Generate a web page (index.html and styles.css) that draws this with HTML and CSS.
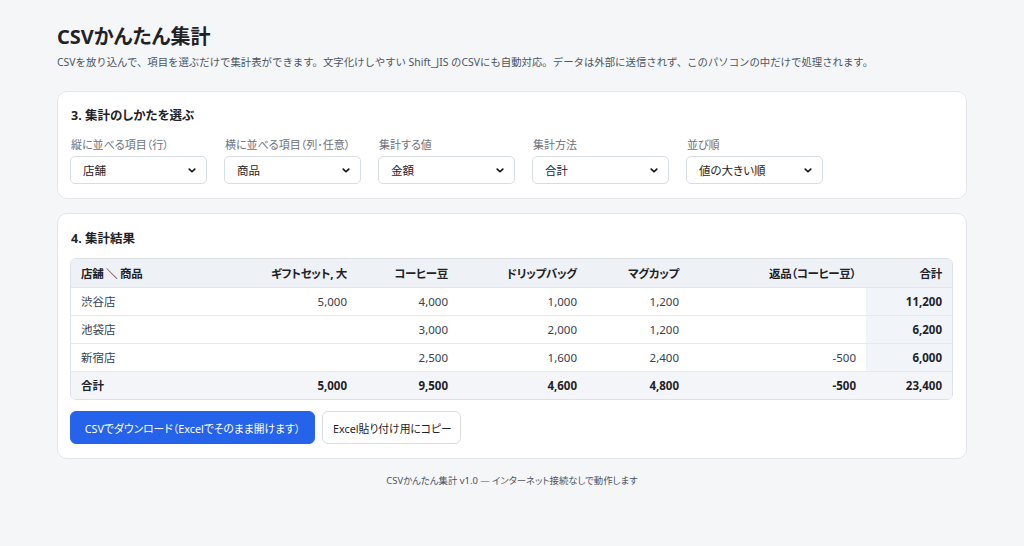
FILE: index.html
```html
<!DOCTYPE html>
<html lang="ja">
<head>
<meta charset="utf-8">
<title>CSVかんたん集計</title>
<link rel="stylesheet" href="styles.css">
</head>
<body>
<div class="wrap">
  <h1 class="title">CSVかんたん集計</h1>
  <p class="lead">CSVを放り込んで、項目を選ぶだけで集計表ができます。文字化けしやすい Shift_JIS のCSVにも自動対応。データは外部に送信されず、このパソコンの中だけで処理されます。</p>

  <section class="card">
    <h2 class="card-title">3. 集計のしかたを選ぶ</h2>
    <div class="fields">
      <div class="field">
        <div class="label">縦に並べる項目（行）</div>
        <div class="select"><span>店舗</span><svg viewBox="0 0 10 6" class="chev"><path d="M1.5 1.2l3.5 3.4 3.5-3.4" fill="none" stroke="#111" stroke-width="2" stroke-linecap="round" stroke-linejoin="round"/></svg></div>
      </div>
      <div class="field">
        <div class="label">横に並べる項目（列･任意）</div>
        <div class="select"><span>商品</span><svg viewBox="0 0 10 6" class="chev"><path d="M1.5 1.2l3.5 3.4 3.5-3.4" fill="none" stroke="#111" stroke-width="2" stroke-linecap="round" stroke-linejoin="round"/></svg></div>
      </div>
      <div class="field">
        <div class="label">集計する値</div>
        <div class="select"><span>金額</span><svg viewBox="0 0 10 6" class="chev"><path d="M1.5 1.2l3.5 3.4 3.5-3.4" fill="none" stroke="#111" stroke-width="2" stroke-linecap="round" stroke-linejoin="round"/></svg></div>
      </div>
      <div class="field">
        <div class="label">集計方法</div>
        <div class="select"><span>合計</span><svg viewBox="0 0 10 6" class="chev"><path d="M1.5 1.2l3.5 3.4 3.5-3.4" fill="none" stroke="#111" stroke-width="2" stroke-linecap="round" stroke-linejoin="round"/></svg></div>
      </div>
      <div class="field">
        <div class="label">並び順</div>
        <div class="select"><span>値の大きい順</span><svg viewBox="0 0 10 6" class="chev"><path d="M1.5 1.2l3.5 3.4 3.5-3.4" fill="none" stroke="#111" stroke-width="2" stroke-linecap="round" stroke-linejoin="round"/></svg></div>
      </div>
    </div>
  </section>

  <section class="card card-result">
    <h2 class="card-title">4. 集計結果</h2>
    <div class="table-box">
      <table class="result">
        <colgroup>
          <col class="c1"><col class="c2"><col class="c3"><col class="c4"><col class="c5"><col class="c6"><col class="c7">
        </colgroup>
        <thead>
          <tr><th class="left">店舗 ＼ 商品</th><th>ギフトセット, 大</th><th>コーヒー豆</th><th>ドリップバッグ</th><th>マグカップ</th><th>返品（コーヒー豆）</th><th>合計</th></tr>
        </thead>
        <tbody>
          <tr><td class="left">渋谷店</td><td>5,000</td><td>4,000</td><td>1,000</td><td>1,200</td><td></td><td class="sum">11,200</td></tr>
          <tr><td class="left">池袋店</td><td></td><td>3,000</td><td>2,000</td><td>1,200</td><td></td><td class="sum">6,200</td></tr>
          <tr><td class="left">新宿店</td><td></td><td>2,500</td><td>1,600</td><td>2,400</td><td>-500</td><td class="sum">6,000</td></tr>
        </tbody>
        <tfoot>
          <tr><td class="left">合計</td><td>5,000</td><td>9,500</td><td>4,600</td><td>4,800</td><td>-500</td><td>23,400</td></tr>
        </tfoot>
      </table>
    </div>
    <div class="actions">
      <button class="btn btn-primary">CSVでダウンロード（Excelでそのまま開けます）</button>
      <button class="btn btn-plain">Excel貼り付け用にコピー</button>
    </div>
  </section>

  <p class="footer">CSVかんたん集計 v1.0 — インターネット接続なしで動作します</p>
</div>
</body>
</html>
```

FILE: styles.css
```css
* { box-sizing: border-box; }
html, body { margin: 0; padding: 0; }
body {
  background: #f5f6f8;
  color: #1f2937;
  font-family: "Noto Sans", "Noto Sans CJK JP", sans-serif;
  font-size: 12px;
  font-feature-settings: "palt";
}
.wrap {
  width: 910px;
  margin: 0 auto;
  padding-top: 23px;
}
.title {
  margin: 0;
  font-size: 20px;
  font-weight: 700;
  line-height: 28px;
  color: #1f2328;
}
.lead {
  margin: 2px 0 0;
  font-size: 10.4px;
  line-height: 18px;
  color: #4b5563;
  font-feature-settings: normal;
}
.card {
  background: #fff;
  border: 1px solid #e3e6ea;
  border-radius: 10px;
  padding: 14px 13px 14px 12px;
  margin-top: 20px;
}
.card-title {
  margin: 0 0 0 1px;
  font-size: 12.5px;
  font-weight: 700;
  line-height: 20px;
  color: #1f2328;
}
.fields {
  display: flex;
  gap: 17px;
  margin-top: 11px;
}
.field { width: 137px; }
.label {
  font-size: 11px;
  line-height: 16px;
  color: #6b7280;
  margin-bottom: 3px;
  padding-left: 1px;
}
.select {
  height: 28px;
  border: 1px solid #d8dde3;
  border-radius: 5px;
  background: #fff;
  display: flex;
  align-items: center;
  justify-content: space-between;
  padding: 0 10px 0 12px;
  font-size: 11.5px;
  color: #1f2328;
}
.chev { width: 8px; height: 5px; }
.card-result { margin-top: 14px; padding-top: 15px; }
.table-box {
  margin-top: 9px;
  border: 1px solid #dde2e8;
  border-radius: 6px;
  overflow: hidden;
}
.result {
  width: 100%;
  border-collapse: collapse;
  table-layout: fixed;
  font-size: 11.5px;
}
.c1 { width: 150px; }
.c2 { width: 136px; }
.c3 { width: 101px; }
.c4 { width: 129px; }
.c5 { width: 102px; }
.c6 { width: 177px; }
.c7 { width: auto; }
.result th, .result td {
  height: 28px;
  padding: 0 10px;
  text-align: right;
  white-space: nowrap;
}
.result .left { text-align: left; }
.result thead th {
  background: #eef1f5;
  font-weight: 700;
  color: #1f2328;
  border-bottom: 1px solid #e2e6eb;
  letter-spacing: -0.3px;
}
.result tbody td {
  color: #374151;
  border-bottom: 1px solid #e5e8ec;
}
.result tbody td.sum {
  background: #f1f4f8;
  font-weight: 700;
  color: #1f2328;
}
.result tfoot td {
  background: #f3f5f8;
  font-weight: 700;
  color: #1f2328;
}
.actions {
  display: flex;
  gap: 7px;
  margin-top: 11px;
}
.btn {
  height: 33px;
  border-radius: 6px;
  font-family: inherit;
  font-feature-settings: "palt";
  font-size: 10.8px;
  padding: 0 10px;
  white-space: nowrap;
  cursor: pointer;
}
.btn-primary {
  background: #2563eb;
  color: #fff;
  border: 1px solid #2563eb;
  width: 245px;
}
.btn-plain {
  background: #fff;
  color: #1f2328;
  border: 1px solid #d8dde3;
  width: 139px;
}
.footer {
  text-align: center;
  font-size: 9.4px;
  color: #4b5563;
  margin: 14px 0 0;
}
```
